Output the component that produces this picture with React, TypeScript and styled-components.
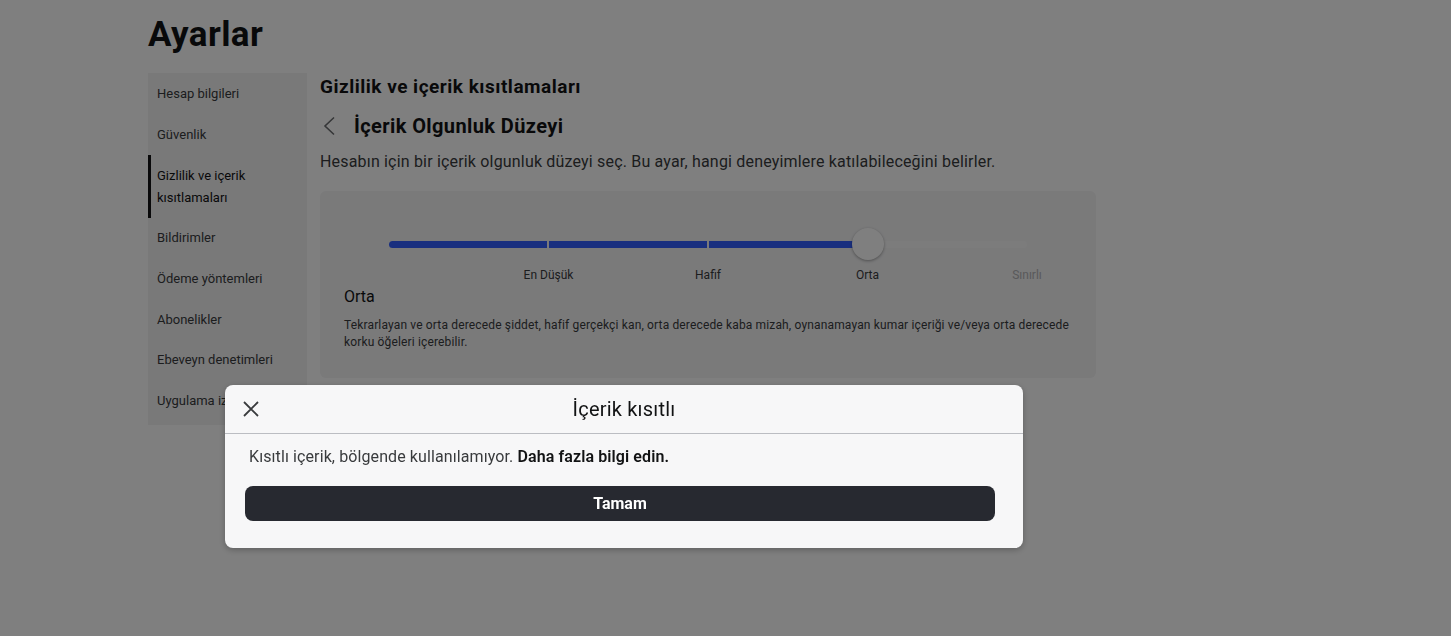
import React from "react";
import styled, { createGlobalStyle } from "styled-components";

const Global = createGlobalStyle`
  html, body { margin: 0; padding: 0; background: #ffffff; }
  body { font-family: Roboto, "Noto Sans", "Liberation Sans", sans-serif; color: #1c1d1f; }
  * { box-sizing: border-box; }
`;

const Page = styled.div`
  width: 1451px;
  height: 636px;
  padding: 14px 0 0 148px;
  background: #ffffff;
  overflow: hidden;
`;

const Title = styled.h1`
  margin: 0;
  font-size: 35px;
  font-weight: 700;
  line-height: 42px;
  color: #111214;
  letter-spacing: 0.4px;
`;

const Layout = styled.div`
  display: flex;
  gap: 13px;
  margin-top: 17px;
  align-items: flex-start;
`;

const Sidebar = styled.nav`
  width: 159px;
  background: #f2f2f3;
  display: flex;
  flex-direction: column;
  padding: 1px 0 4px;
`;

const NavItem = styled.div<{ $active?: boolean }>`
  height: ${(p) => (p.$active ? "63px" : "40.6px")};
  padding: ${(p) => (p.$active ? "10px 12px 9px 6px" : "0 12px 0 9px")};
  font-size: 13px;
  line-height: 22px;
  color: ${(p) => (p.$active ? "#121314" : "#393b3d")};
  border-left: ${(p) => (p.$active ? "3px solid #121314" : "none")};
  display: flex;
  align-items: center;
  white-space: pre-line;
  flex-shrink: 0;
`;

const Content = styled.main`
  width: 776px;
  display: flex;
  flex-direction: column;
`;

const SectionTitle = styled.h2`
  margin: 0;
  font-size: 19px;
  font-weight: 700;
  line-height: 28px;
  letter-spacing: 0.5px;
  color: #121314;
`;

const SubHeader = styled.div`
  display: flex;
  align-items: center;
  gap: 18px;
  margin-top: 10px;
  height: 30px;
`;

const BackButton = styled.button`
  border: none;
  background: none;
  padding: 0 0 0 2px;
  width: 16px;
  display: flex;
  align-items: center;
  cursor: pointer;
`;

const SubTitle = styled.h3`
  margin: 0;
  font-size: 20px;
  font-weight: 700;
  letter-spacing: 0.4px;
  color: #121314;
`;

const Description = styled.p`
  margin: 9px 0 0;
  font-size: 16px;
  line-height: 24px;
  letter-spacing: 0.18px;
  color: #393b3d;
`;

const Card = styled.section`
  margin-top: 17px;
  background: #f4f4f5;
  border-radius: 6px;
  padding: 37px 18px 28px 24px;
  height: 187px;
`;

const SliderArea = styled.div`
  margin: 0 51px 0 45px;
`;

const TrackWrap = styled.div`
  position: relative;
  height: 32px;
  display: flex;
  align-items: center;
`;

const Track = styled.div`
  display: flex;
  gap: 2px;
  width: 100%;
  height: 7px;
`;

const Segment = styled.div<{ $filled: boolean; $first?: boolean; $last?: boolean }>`
  flex: 1;
  background: ${(p) => (p.$filled ? "#335fff" : "#f8f8f9")};
  border-radius: ${(p) => (p.$first ? "4px 0 0 4px" : p.$last ? "0 4px 4px 0" : "0")};
`;

const Thumb = styled.div`
  position: absolute;
  top: 0;
  width: 32px;
  height: 32px;
  margin-left: -16px;
  border-radius: 50%;
  background: #ffffff;
  box-shadow: 0 1px 3px rgba(0, 0, 0, 0.35);
`;

const Labels = styled.div`
  display: flex;
  margin-top: 6px;
`;

const LabelCell = styled.div`
  flex: 1;
  display: flex;
  justify-content: flex-end;
`;

const Label = styled.span<{ $muted?: boolean }>`
  transform: translateX(50%);
  font-size: 12px;
  line-height: 18px;
  color: ${(p) => (p.$muted ? "#b2b3b6" : "#393b3d")};
`;

const LevelName = styled.div`
  margin-top: 1px;
  font-size: 16px;
  line-height: 24px;
  color: #121314;
`;

const LevelDesc = styled.p`
  margin: 8px 0 0;
  font-size: 12px;
  line-height: 17px;
  letter-spacing: 0.15px;
  color: #393b3d;
`;

const Overlay = styled.div`
  position: fixed;
  inset: 0;
  background: rgba(0, 0, 0, 0.5);
`;

const Modal = styled.div`
  position: fixed;
  left: 225px;
  top: 385px;
  width: 798px;
  background: #f7f7f8;
  border-radius: 8px;
  box-shadow: 0 2px 6px rgba(0, 0, 0, 0.25);
  overflow: hidden;
`;

const ModalHeader = styled.div`
  position: relative;
  height: 49px;
  border-bottom: 1px solid #bbbdc2;
  display: flex;
  align-items: center;
  justify-content: center;
`;

const CloseButton = styled.button`
  position: absolute;
  left: 16px;
  top: 50%;
  transform: translateY(-50%);
  border: none;
  background: none;
  padding: 0;
  width: 20px;
  height: 20px;
  display: flex;
  align-items: center;
  justify-content: center;
  cursor: pointer;
`;

const ModalTitle = styled.div`
  font-size: 20px;
  letter-spacing: 0.2px;
  color: #121314;
`;

const ModalBody = styled.div`
  padding: 11px 28px 27px 20px;
`;

const ModalText = styled.p`
  margin: 0 0 17px 4px;
  font-size: 16px;
  line-height: 24px;
  letter-spacing: 0.1px;
  color: #393b3d;
`;

const Link = styled.span`
  font-weight: 600;
  color: #121314;
`;

const PrimaryButton = styled.button`
  width: 100%;
  height: 35px;
  border: none;
  border-radius: 8px;
  background: #272930;
  color: #ffffff;
  font-family: inherit;
  font-size: 16px;
  font-weight: 700;
  cursor: pointer;
`;

const navItems = [
  "Hesap bilgileri",
  "Güvenlik",
  "Gizlilik ve içerik\nkısıtlamaları",
  "Bildirimler",
  "Ödeme yöntemleri",
  "Abonelikler",
  "Ebeveyn denetimleri",
  "Uygulama izinleri",
];

const levels = ["En Düşük", "Hafif", "Orta", "Sınırlı"];
const selected = 2;

export default function App() {
  return (
    <>
      <Global />
      <Page>
        <Title>Ayarlar</Title>
        <Layout>
          <Sidebar>
            {navItems.map((n, i) => (
              <NavItem key={n} $active={i === 2}>
                {n}
              </NavItem>
            ))}
          </Sidebar>
          <Content>
            <SectionTitle>Gizlilik ve içerik kısıtlamaları</SectionTitle>
            <SubHeader>
              <BackButton aria-label="Geri">
                <svg width="14" height="20" viewBox="0 0 14 20" fill="none">
                  <path d="M12 1.5 L3 10 L12 18.5" stroke="#6b6d70" strokeWidth="1.6" />
                </svg>
              </BackButton>
              <SubTitle>İçerik Olgunluk Düzeyi</SubTitle>
            </SubHeader>
            <Description>
              Hesabın için bir içerik olgunluk düzeyi seç. Bu ayar, hangi deneyimlere katılabileceğini belirler.
            </Description>
            <Card>
              <SliderArea>
                <TrackWrap>
                  <Track>
                    {levels.map((l, i) => (
                      <Segment key={l} $filled={i <= selected} $first={i === 0} $last={i === levels.length - 1} />
                    ))}
                  </Track>
                  <Thumb style={{ left: `${((selected + 1) / levels.length) * 100}%` }} />
                </TrackWrap>
                <Labels>
                  {levels.map((l, i) => (
                    <LabelCell key={l}>
                      <Label $muted={i > selected}>{l}</Label>
                    </LabelCell>
                  ))}
                </Labels>
              </SliderArea>
              <LevelName>Orta</LevelName>
              <LevelDesc>
                Tekrarlayan ve orta derecede şiddet, hafif gerçekçi kan, orta derecede kaba mizah, oynanamayan kumar içeriği ve/veya orta derecede korku öğeleri içerebilir.
              </LevelDesc>
            </Card>
          </Content>
        </Layout>
      </Page>
      <Overlay />
      <Modal role="dialog">
        <ModalHeader>
          <CloseButton aria-label="Kapat">
            <svg width="18" height="18" viewBox="0 0 18 18" fill="none">
              <path d="M2 2 L16 16 M16 2 L2 16" stroke="#393b3d" strokeWidth="1.8" />
            </svg>
          </CloseButton>
          <ModalTitle>İçerik kısıtlı</ModalTitle>
        </ModalHeader>
        <ModalBody>
          <ModalText>
            Kısıtlı içerik, bölgende kullanılamıyor. <Link>Daha fazla bilgi edin.</Link>
          </ModalText>
          <PrimaryButton>Tamam</PrimaryButton>
        </ModalBody>
      </Modal>
    </>
  );
}
